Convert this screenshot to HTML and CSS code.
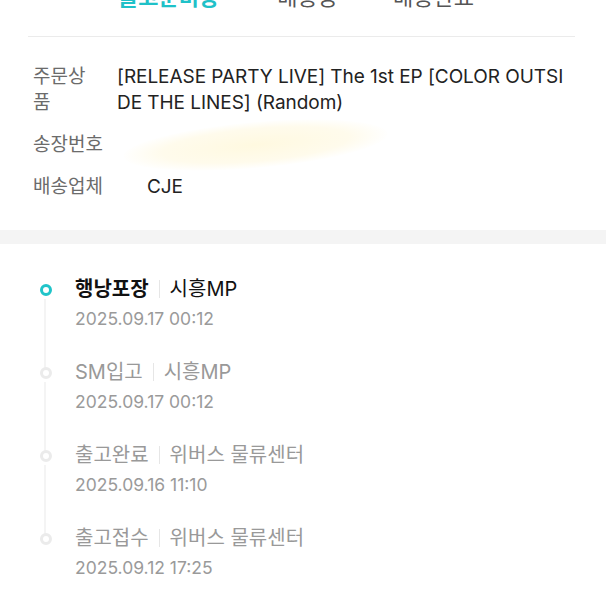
FILE: index.html
```html
<!DOCTYPE html>
<html lang="ko">
<head>
    <meta charset="UTF-8">
    <meta name="viewport" content="width=device-width, initial-scale=1.0">
    <title>배송조회</title>
    <link rel="stylesheet" href="styles.css">
</head>
<body>

    <!-- Status tabs (scrolled, only bottoms visible) -->
    <div class="tabs">
        <span class="tab active">출고준비중</span>
        <span class="tab">배송중</span>
        <span class="tab">배송완료</span>
    </div>

    <!-- Order info -->
    <div class="info">
        <div class="info-row">
            <div class="label">주문상<br>품</div>
            <div class="value">[RELEASE PARTY LIVE] The 1st EP [COLOR OUTSI<br>DE THE LINES] (Random)</div>
        </div>
        <div class="info-row">
            <div class="label">송장번호</div>
            <div class="value"><span class="redacted"></span></div>
        </div>
        <div class="info-row">
            <div class="label">배송업체</div>
            <div class="value carrier">CJE</div>
        </div>
    </div>

    <div class="spacer"></div>

    <!-- Tracking timeline -->
    <ul class="timeline">
        <li class="step current">
            <div class="title">행낭포장<span class="sep"></span><span class="place">시흥MP</span></div>
            <div class="date">2025.09.17 00:12</div>
        </li>
        <li class="step">
            <div class="title">SM입고<span class="sep"></span><span class="place">시흥MP</span></div>
            <div class="date">2025.09.17 00:12</div>
        </li>
        <li class="step">
            <div class="title">출고완료<span class="sep"></span><span class="place">위버스 물류센터</span></div>
            <div class="date">2025.09.16 11:10</div>
        </li>
        <li class="step">
            <div class="title">출고접수<span class="sep"></span><span class="place">위버스 물류센터</span></div>
            <div class="date">2025.09.12 17:25</div>
        </li>
    </ul>

</body>
</html>
```

FILE: styles.css
```css
body {
    margin: 0;
    background: #ffffff;
    font-family: Inter, "Noto Sans CJK KR", sans-serif;
    color: #222222;
    overflow: hidden;
}

.tabs {
    display: flex;
    margin: -15px 31px 0 28px;
    padding-bottom: 27px;
    border-bottom: 1px solid #ebebeb;
    font-size: 22px;
    line-height: 24px;
}

.tab {
    color: #555555;
}

.tab.active {
    margin-left: 90px;
    color: #1fc1c8;
    font-weight: bold;
}

.tab:nth-child(2) {
    margin-left: 58px;
}

.tab:nth-child(3) {
    margin-left: 55px;
}

.info {
    display: flex;
    flex-direction: column;
    gap: 16px;
    padding: 27px 20px 28px 33px;
}

.info-row {
    display: flex;
    font-size: 19px;
    line-height: 26px;
}

.label {
    width: 84px;
    flex-shrink: 0;
    color: #6b6b6b;
}

.value {
    color: #222222;
    letter-spacing: -0.05px;
}

.carrier {
    padding-left: 30px;
}

.redacted {
    display: block;
    width: 265px;
    height: 46px;
    margin: -10px 0 -10px 6px;
    border-radius: 50%;
    transform: rotate(-5deg);
    background: radial-gradient(ellipse at center, #fff9e0 0%, #fffbec 50%, rgba(255, 255, 255, 0) 72%);
}

.spacer {
    height: 14px;
    background: #f4f4f4;
    margin-top: 2px;
}

.timeline {
    list-style: none;
    margin: 0;
    padding: 33px 0 0 75px;
}

.step {
    position: relative;
    height: 83px;
}

.step::before {
    content: "";
    position: absolute;
    left: -35px;
    top: 7px;
    width: 6px;
    height: 6px;
    border: 3px solid #ebebeb;
    border-radius: 50%;
    background: #ffffff;
}

.step::after {
    content: "";
    position: absolute;
    left: -31px;
    top: 22px;
    width: 2px;
    height: 71px;
    background: #f4f4f4;
}

.step:last-child::after {
    display: none;
}

.step.current::before {
    border-color: #20c4c9;
}

.title {
    display: flex;
    align-items: center;
    font-size: 20px;
    line-height: 24px;
    color: #999999;
}

.current .title {
    color: #111111;
    font-weight: bold;
}

.current .place {
    font-weight: normal;
}

.sep {
    display: inline-block;
    width: 1px;
    height: 18px;
    margin: 0 10px;
    background: #e6e6e6;
}

.date {
    margin-top: 7px;
    font-size: 17.5px;
    line-height: 22px;
    color: #9a9a9a;
}
```
